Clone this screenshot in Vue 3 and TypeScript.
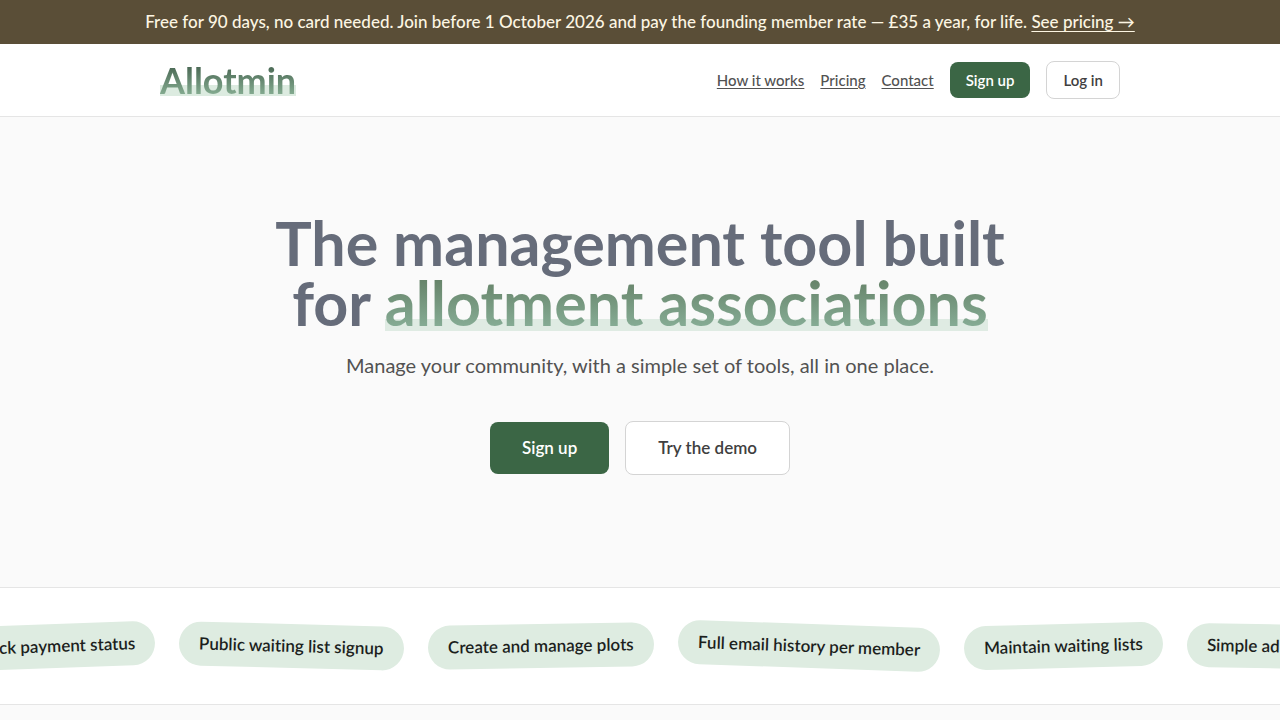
<script setup lang="ts">
interface NavLink {
  label: string
  href: string
}

interface Feature {
  label: string
  tilt: number
}

const links: NavLink[] = [
  { label: 'How it works', href: '#how-it-works' },
  { label: 'Pricing', href: '#pricing' },
  { label: 'Contact', href: '#contact' },
]

const features: Feature[] = [
  { label: 'Track payment status', tilt: -2 },
  { label: 'Public waiting list signup', tilt: 1.5 },
  { label: 'Create and manage plots', tilt: -1 },
  { label: 'Full email history per member', tilt: 2 },
  { label: 'Maintain waiting lists', tilt: -1.5 },
  { label: 'Simple admin', tilt: 1 },
]
</script>

<template>
  <div class="page">
    <p class="banner">
      Free for 90 days, no card needed. Join before 1 October 2026 and pay the founding member rate — £35 a year, for life.
      <a href="#pricing">See pricing →</a>
    </p>

    <header class="header">
      <div class="header-inner">
        <a class="logo" href="#home">Allotmin</a>
        <nav class="nav" aria-label="Main">
          <a v-for="link in links" :key="link.label" class="nav-link" :href="link.href">{{ link.label }}</a>
          <a class="btn btn-primary" href="#sign-up">Sign up</a>
          <a class="btn btn-outline" href="#log-in">Log in</a>
        </nav>
      </div>
    </header>

    <main>
      <section class="hero">
        <h1 class="title">
          The management tool built<br />
          for <span class="marked">allotment associations</span>
        </h1>
        <p class="lead">Manage your community, with a simple set of tools, all in one place.</p>
        <div class="actions">
          <a class="btn btn-large btn-primary" href="#sign-up">Sign up</a>
          <a class="btn btn-large btn-outline" href="#demo">Try the demo</a>
        </div>
      </section>

      <section class="marquee" aria-label="Features">
        <ul class="track">
          <li
            v-for="feature in features"
            :key="feature.label"
            class="pill"
            :style="{ transform: `rotate(${feature.tilt}deg)` }"
          >
            {{ feature.label }}
          </li>
        </ul>
      </section>
    </main>
  </div>
</template>

<style>
body {
  margin: 0;
  background: #fafafa;
}
</style>

<style scoped>
.page {
  min-height: 100vh;
  overflow: hidden;
  background: #fafafa;
  color: #1c1f1d;
  font-family: Lato, "Liberation Sans", sans-serif;
  font-variant-ligatures: none;
}

.banner {
  margin: 0;
  padding: 10px 16px;
  background: #5a4e37;
  color: #fdf6e3;
  font-size: 17px;
  font-weight: 500;
  line-height: 24px;
  text-align: center;
}

.banner a {
  color: inherit;
  text-underline-offset: 3px;
}

.header {
  background: #ffffff;
  border-bottom: 1px solid #e5e5e5;
}

.header-inner {
  display: flex;
  align-items: center;
  justify-content: space-between;
  box-sizing: border-box;
  max-width: 960px;
  min-height: 72px;
  margin: 0 auto;
}

.logo {
  background-image:
    linear-gradient(#4a6854 15%, #83aa8f 85%),
    linear-gradient(transparent 62%, #dcebe0 62%, #dcebe0 90%, transparent 90%);
  background-clip: text, border-box;
  color: transparent;
  font-size: 36px;
  font-weight: 700;
  line-height: 40px;
  text-decoration: none;
}

.nav {
  display: flex;
  align-items: center;
  gap: 16px;
}

.nav-link {
  color: #525252;
  font-size: 15px;
  font-weight: 500;
  line-height: 20px;
  text-underline-offset: 2px;
}

.btn {
  padding: 8px 16px;
  border-radius: 8px;
  font-size: 15px;
  font-weight: 600;
  line-height: 20px;
  text-decoration: none;
}

.btn-primary {
  background: #3b6645;
  color: #ffffff;
}

.btn-outline {
  border: 1px solid #d4d4d4;
  background: #ffffff;
  color: #404040;
}

.btn-large {
  padding: 14px 32px;
  font-size: 17px;
  line-height: 24px;
}

.hero {
  padding: 96px 24px 112px;
  text-align: center;
}

.title {
  margin: 0;
  color: #666c7a;
  font-size: 61px;
  font-weight: 700;
  line-height: 60px;
}

.marked {
  display: inline-block;
  background-image:
    linear-gradient(#668369 10%, #86ac95 90%),
    linear-gradient(transparent 76%, #dfebe3 76%, #dfebe3 96%, transparent 96%);
  background-clip: text, border-box;
  color: transparent;
}

.lead {
  margin: 16px 0 0;
  color: #525252;
  font-size: 20px;
  line-height: 32px;
}

.actions {
  display: flex;
  align-items: center;
  justify-content: center;
  gap: 16px;
  margin-top: 40px;
}

.marquee {
  overflow: hidden;
  border-top: 1px solid #e5e5e5;
  border-bottom: 1px solid #e5e5e5;
  background: #ffffff;
}

.track {
  display: flex;
  gap: 24px;
  width: max-content;
  margin: 0 0 0 -44px;
  padding: 36px 0;
  list-style: none;
}

.pill {
  padding: 10px 20px;
  border-radius: 22px;
  background: #deece1;
  font-size: 17px;
  font-weight: 600;
  line-height: 24px;
  white-space: nowrap;
}
</style>
